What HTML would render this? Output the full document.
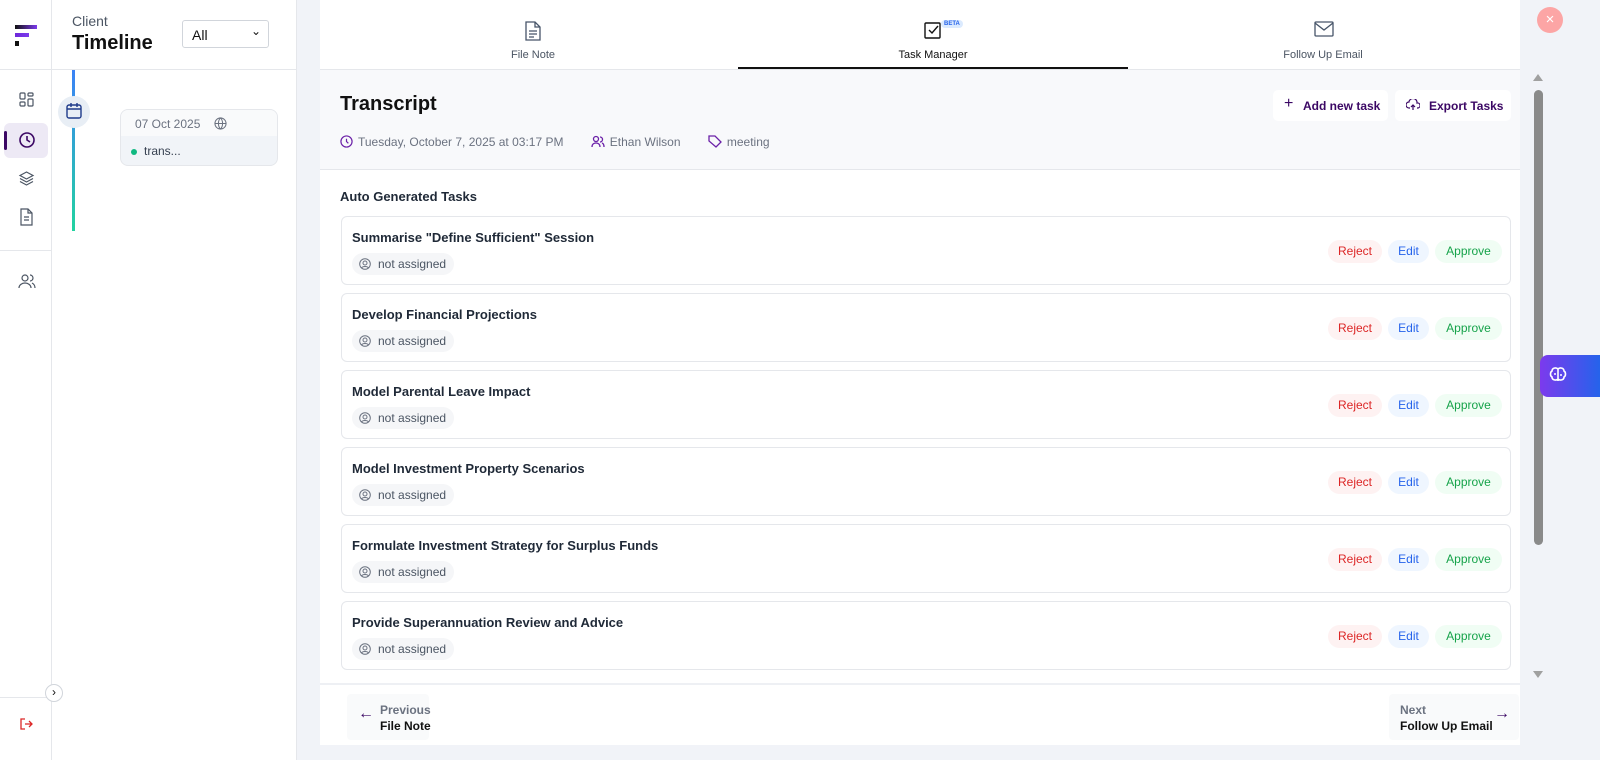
<!DOCTYPE html>
<html><head><meta charset="utf-8"><style>
*{box-sizing:border-box;margin:0;padding:0}
body{width:1600px;height:760px;overflow:hidden;background:#f1f3f8;font-family:"Liberation Sans",sans-serif;position:relative;color:#1f2937}
.abs{position:absolute}
.side{left:0;top:0;width:52px;height:760px;background:#fff;border-right:1px solid #e5e7eb}
.tl{left:52px;top:0;width:245px;height:760px;background:#fff;border-right:1px solid #e5e7eb}
.main{left:320px;top:0;width:1200px;height:745px;background:#fff}
.tab{position:absolute;top:0;width:390px;height:69px;text-align:center;font-size:11px;color:#4b5563}
.tab svg{position:absolute;left:50%;top:21px;margin-left:-9px}
.tab span{position:absolute;left:0;right:0;top:49px}
.card{position:absolute;left:21px;width:1170px;height:69px;border:1px solid #e5e7eb;border-radius:6px;background:#fff}
.card .t{position:absolute;left:10px;top:13px;font-size:13px;font-weight:bold;color:#1f2937}
.card .c{position:absolute;left:10px;top:36px;height:22px;border-radius:11px;background:#f5f6f8;font-size:12px;color:#4b5563;padding:4px 8px 0 26px}
.card .c svg{position:absolute;left:7px;top:5px}
.b{position:absolute;top:23px;height:23px;border-radius:12px;font-size:12px;text-align:center;line-height:23px}
.rj{left:986px;width:54px;background:#fef2f2;color:#dc2626}
.ed{left:1046px;width:41px;background:#eff6ff;color:#2563eb}
.ap{left:1093px;width:67px;background:#f0fdf4;color:#16a34a}
</style></head><body>
<div class="abs side">
 <div class="abs" style="left:15px;top:25px;width:22px;height:4px;background:linear-gradient(90deg,#111,#7c3aed)"></div>
 <div class="abs" style="left:15px;top:33px;width:14px;height:4px;background:linear-gradient(90deg,#6d28d9,#7c3aed)"></div>
 <div class="abs" style="left:15px;top:41px;width:4px;height:5px;background:#111"></div>
 <div class="abs" style="left:0;top:69px;width:52px;border-top:1px solid #e5e7eb"></div>
 <svg class="abs" style="left:19px;top:92px" width="15" height="15" viewBox="0 0 15 15" fill="none" stroke="#4b5563" stroke-width="1.2"><rect x="1" y="1" width="5" height="6" rx="1"/><rect x="9" y="1" width="5" height="3" rx="1"/><rect x="1" y="10" width="5" height="4" rx="1"/><rect x="9" y="7" width="5" height="7" rx="1"/></svg>
 <div class="abs" style="left:4px;top:123px;width:44px;height:35px;background:#ede9f5;border-radius:6px"></div>
 <div class="abs" style="left:4px;top:131px;width:3px;height:19px;background:#3b0764;border-radius:2px"></div>
 <svg class="abs" style="left:18px;top:131px" width="18" height="18" viewBox="0 0 18 18" fill="none" stroke="#3b0764" stroke-width="1.6"><circle cx="9" cy="9" r="7"/><path d="M9 5v4l3 2"/></svg>
 <svg class="abs" style="left:18px;top:170px" width="17" height="17" viewBox="0 0 17 17" fill="none" stroke="#4b5563" stroke-width="1.2"><path d="M8.5 2L15 5.5 8.5 9 2 5.5z"/><path d="M2 8.5L8.5 12 15 8.5"/><path d="M2 11.5L8.5 15 15 11.5"/></svg>
 <svg class="abs" style="left:19px;top:208px" width="15" height="18" viewBox="0 0 15 18" fill="none" stroke="#4b5563" stroke-width="1.2"><path d="M2 1h7l4 4v12H2z"/><path d="M9 1v4h4M5 9h5M5 12h5"/></svg>
 <div class="abs" style="left:0;top:250px;width:52px;border-top:1px solid #e5e7eb"></div>
 <svg class="abs" style="left:18px;top:273px" width="18" height="16" viewBox="0 0 18 16" fill="none" stroke="#4b5563" stroke-width="1.2"><circle cx="7" cy="5" r="3"/><path d="M1 15c0-3 3-5 6-5s6 2 6 5M12 2a3 3 0 010 6M14 10c2 1 3 3 3 5"/></svg>
 <div class="abs" style="left:0;top:697px;width:52px;border-top:1px solid #e5e7eb"></div>
 <svg class="abs" style="left:20px;top:718px" width="13" height="12" viewBox="0 0 13 12" fill="none" stroke="#dc2626" stroke-width="1.3"><path d="M5 1H1v10h4M5 6h7M9 3l3 3-3 3"/></svg>
</div>
<div class="abs tl">
 <div class="abs" style="left:20px;top:13px;font-size:14px;color:#4b5563">Client</div>
 <div class="abs" style="left:20px;top:32px;font-size:20px;font-weight:bold;color:#111">Timeline</div>
 <div class="abs" style="left:130px;top:20px;width:87px;height:28px;border:1px solid #d1d5db;border-radius:3px;font-size:14px;padding:6px 0 0 9px;color:#111">All<span style="position:absolute;right:7px;top:3px;font-size:12px">⌄</span></div>
 <div class="abs" style="left:0;top:69px;width:245px;border-top:1px solid #e5e7eb"></div>
 <div class="abs" style="left:20px;top:70px;width:3px;height:161px;background:linear-gradient(#3b82f6,#22d3a0)"></div>
 <div class="abs" style="left:6px;top:96px;width:32px;height:32px;border-radius:50%;background:#e8eef5"></div>
 <svg class="abs" style="left:13px;top:102px" width="18" height="18" viewBox="0 0 18 18" fill="none" stroke="#1e3a8a" stroke-width="1.4"><rect x="2" y="3" width="14" height="13" rx="2"/><path d="M2 7h14M6 1v4M12 1v4"/></svg>
 <div class="abs" style="left:68px;top:109px;width:158px;height:57px;border:1px solid #e5e7eb;border-radius:8px;background:#f1f4f8;overflow:hidden">
  <div style="height:26px;background:#f9fafb;font-size:12px;color:#6b7280;padding:7px 0 0 14px">07 Oct 2025<svg style="position:absolute;left:93px;top:7px" width="13" height="13" viewBox="0 0 14 14" fill="none" stroke="#6b7280" stroke-width="1.1"><circle cx="7" cy="7" r="6"/><path d="M1 7h12M7 1c3 3 3 9 0 12M7 1c-3 3-3 9 0 12"/></svg></div>
  <div style="font-size:12px;color:#374151;padding:8px 0 0 23px;position:relative">trans...<span style="position:absolute;left:10px;top:13px;width:6px;height:6px;border-radius:50%;background:#10b981"></span></div>
 </div>
</div>
<div class="abs" style="left:45px;top:684px;width:18px;height:18px;border-radius:50%;background:#fff;border:1px solid #d1d5db;font-size:12px;text-align:center;line-height:15px;color:#111;z-index:5">›</div>
<div class="abs main">
 <div class="tab" style="left:18px"><svg width="18" height="20" viewBox="0 0 18 20" fill="none" stroke="#475569" stroke-width="1.3"><path d="M2 1h9l5 5v13H2z"/><path d="M11 1v5h5M5 10h8M5 13h8M5 16h5"/></svg><span>File Note</span></div>
 <div class="tab" style="left:418px"><svg width="18" height="18" viewBox="0 0 18 18" fill="none" stroke="#111" stroke-width="1.4"><rect x="1" y="2" width="15" height="15" rx="1"/><path d="M5 9l3 3 6-7"/></svg><div style="position:absolute;left:203px;top:20px;font-size:6px;color:#2563eb;background:#dbeafe;border-radius:4px;padding:1px 3px;font-weight:bold">BETA</div><span style="color:#111">Task Manager</span></div>
 <div class="abs" style="left:418px;top:67px;width:390px;height:2px;background:#111"></div>
 <div class="tab" style="left:808px"><svg width="20" height="16" viewBox="0 0 20 16" fill="none" stroke="#475569" stroke-width="1.3"><rect x="1" y="1" width="18" height="14" rx="1"/><path d="M1 2l9 7 9-7"/></svg><span>Follow Up Email</span></div>
 <div class="abs" style="left:0;top:69px;width:1200px;height:101px;background:#f8f9fb;border-top:1px solid #e5e7eb;border-bottom:1px solid #e5e7eb">
  <div class="abs" style="left:20px;top:23px;font-size:20px;font-weight:bold;color:#111">Transcript</div>
  <div class="abs" style="left:20px;top:65px;font-size:12px;color:#6b7280;white-space:nowrap">
   <svg style="vertical-align:-2px;margin-right:5px" width="13" height="13" viewBox="0 0 14 14" fill="none" stroke="#6b21a8" stroke-width="1.3"><circle cx="7" cy="7" r="6"/><path d="M7 4v3l2 2"/></svg>Tuesday, October 7, 2025 at 03:17 PM
   <svg style="vertical-align:-2px;margin:0 5px 0 24px" width="14" height="13" viewBox="0 0 14 13" fill="none" stroke="#6b21a8" stroke-width="1.3"><circle cx="5" cy="4" r="2.5"/><path d="M1 12c0-3 2-4 4-4s4 1 4 4M9 2a2.5 2.5 0 010 5M11 8c1.5.5 2 2 2 4"/></svg>Ethan Wilson
   <svg style="vertical-align:-2px;margin:0 5px 0 24px" width="14" height="13" viewBox="0 0 14 13" fill="none" stroke="#6b21a8" stroke-width="1.3"><path d="M1 1h6l6 6-5 5-7-6z"/></svg>meeting
  </div>
  <div class="abs" style="left:953px;top:20px;width:115px;height:31px;background:#fff;border-radius:5px;font-size:12px;font-weight:bold;color:#3b0764;padding:9px 0 0 30px;white-space:nowrap"><span style="position:absolute;left:11px;top:5px;font-size:16px;font-weight:normal">+</span>Add new task</div>
  <div class="abs" style="left:1075px;top:20px;width:116px;height:31px;background:#fff;border-radius:5px;font-size:12px;font-weight:bold;color:#3b0764;padding:9px 0 0 34px;white-space:nowrap"><svg style="position:absolute;left:11px;top:9px" width="14" height="12" viewBox="0 0 14 12" fill="none" stroke="#3b0764" stroke-width="1.2"><path d="M4 9H3a3 3 0 010-6 4 4 0 018 1 2.5 2.5 0 011 5h-1M7 11V6M5 8l2-2 2 2"/></svg>Export Tasks</div>
 </div>
 <div class="abs" style="left:20px;top:189px;font-size:13px;font-weight:bold;color:#1f2937">Auto Generated Tasks</div>
 <div class="card" style="top:216px"><div class="t">Summarise "Define Sufficient" Session</div><div class="c"><svg width="12" height="12" viewBox="0 0 12 12" fill="none" stroke="#6b7280" stroke-width="1"><circle cx="6" cy="6" r="5.3"/><circle cx="6" cy="5" r="2"/><path d="M2.5 10c1-2 6-2 7 0"/></svg>not assigned</div><div class="b rj">Reject</div><div class="b ed">Edit</div><div class="b ap">Approve</div></div>
 <div class="card" style="top:293px"><div class="t">Develop Financial Projections</div><div class="c"><svg width="12" height="12" viewBox="0 0 12 12" fill="none" stroke="#6b7280" stroke-width="1"><circle cx="6" cy="6" r="5.3"/><circle cx="6" cy="5" r="2"/><path d="M2.5 10c1-2 6-2 7 0"/></svg>not assigned</div><div class="b rj">Reject</div><div class="b ed">Edit</div><div class="b ap">Approve</div></div>
 <div class="card" style="top:370px"><div class="t">Model Parental Leave Impact</div><div class="c"><svg width="12" height="12" viewBox="0 0 12 12" fill="none" stroke="#6b7280" stroke-width="1"><circle cx="6" cy="6" r="5.3"/><circle cx="6" cy="5" r="2"/><path d="M2.5 10c1-2 6-2 7 0"/></svg>not assigned</div><div class="b rj">Reject</div><div class="b ed">Edit</div><div class="b ap">Approve</div></div>
 <div class="card" style="top:447px"><div class="t">Model Investment Property Scenarios</div><div class="c"><svg width="12" height="12" viewBox="0 0 12 12" fill="none" stroke="#6b7280" stroke-width="1"><circle cx="6" cy="6" r="5.3"/><circle cx="6" cy="5" r="2"/><path d="M2.5 10c1-2 6-2 7 0"/></svg>not assigned</div><div class="b rj">Reject</div><div class="b ed">Edit</div><div class="b ap">Approve</div></div>
 <div class="card" style="top:524px"><div class="t">Formulate Investment Strategy for Surplus Funds</div><div class="c"><svg width="12" height="12" viewBox="0 0 12 12" fill="none" stroke="#6b7280" stroke-width="1"><circle cx="6" cy="6" r="5.3"/><circle cx="6" cy="5" r="2"/><path d="M2.5 10c1-2 6-2 7 0"/></svg>not assigned</div><div class="b rj">Reject</div><div class="b ed">Edit</div><div class="b ap">Approve</div></div>
 <div class="card" style="top:601px"><div class="t">Provide Superannuation Review and Advice</div><div class="c"><svg width="12" height="12" viewBox="0 0 12 12" fill="none" stroke="#6b7280" stroke-width="1"><circle cx="6" cy="6" r="5.3"/><circle cx="6" cy="5" r="2"/><path d="M2.5 10c1-2 6-2 7 0"/></svg>not assigned</div><div class="b rj">Reject</div><div class="b ed">Edit</div><div class="b ap">Approve</div></div>
 <div class="abs" style="left:0;top:683px;width:1200px;border-top:2px solid #eef0f4"></div>
 <div class="abs" style="left:27px;top:694px;width:82px;height:46px;background:#f9fafb;border-radius:4px;font-size:12px;font-weight:bold;padding:8px 0 0 33px;line-height:16px;white-space:nowrap"><div style="color:#6b7280">Previous</div><div style="color:#111">File Note</div><span style="position:absolute;left:11px;top:12px;color:#3b0764;font-size:16px;font-weight:normal">←</span></div>
 <div class="abs" style="left:1069px;top:694px;width:130px;height:46px;background:#f9fafb;border-radius:4px;font-size:12px;font-weight:bold;padding:8px 0 0 11px;line-height:16px;white-space:nowrap"><div style="color:#6b7280">Next</div><div style="color:#111">Follow Up Email</div><span style="position:absolute;right:9px;top:12px;color:#3b0764;font-size:16px;font-weight:normal">→</span></div>
</div>
<div class="abs" style="left:1520px;top:0;width:80px;height:760px;background:#f1f3f8"></div>
<div class="abs" style="left:1530px;top:70px;width:16px;height:613px;background:#f1f3f8"></div>
<div class="abs" style="left:1534px;top:90px;width:9px;height:455px;background:#8a8a8a;border-radius:5px"></div>
<div class="abs" style="left:1533px;top:74px;width:0;height:0;border-left:5px solid transparent;border-right:5px solid transparent;border-bottom:7px solid #a0a0a0"></div>
<div class="abs" style="left:1533px;top:671px;width:0;height:0;border-left:5px solid transparent;border-right:5px solid transparent;border-top:7px solid #a0a0a0"></div>
<div class="abs" style="left:1537px;top:7px;width:26px;height:26px;border-radius:50%;background:#fca5a5;color:#fff;text-align:center;line-height:25px;font-size:15px">×</div>
<div class="abs" style="left:1540px;top:355px;width:60px;height:42px;border-radius:8px 0 0 8px;background:linear-gradient(90deg,#7c3aed,#2563eb)"></div>
<svg class="abs" style="left:1549px;top:366px" width="18" height="18" viewBox="0 0 18 18" fill="none" stroke="#fff" stroke-width="1.6"><path d="M9 3c-2-2-6-1-6 2-2 1-2 5 0 6 0 3 4 4 6 2 2 2 6 1 6-2 2-1 2-5 0-6 0-3-4-4-6-2zM9 3v12M5 8h2M11 9h2"/></svg>
</body></html>
